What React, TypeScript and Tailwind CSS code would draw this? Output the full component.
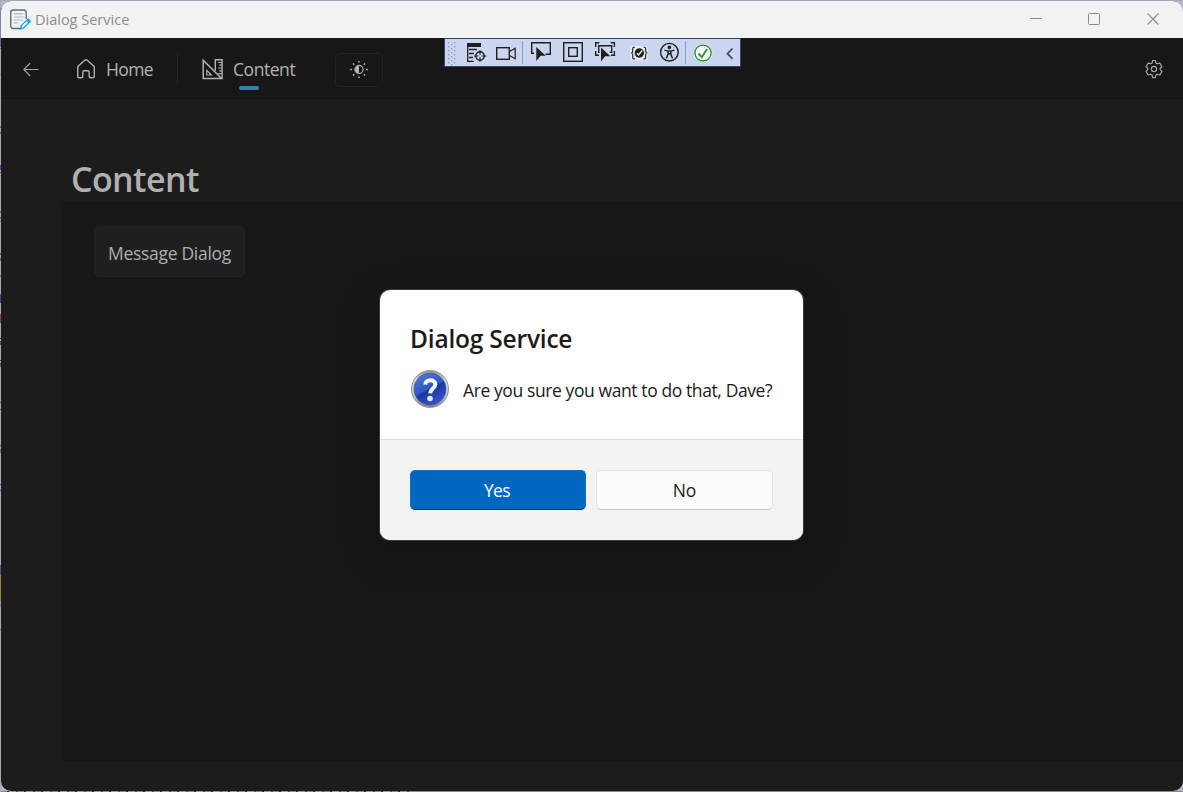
import React from "react";

type Mark = [top: number, height: number, color: string];

const editorMarks: Mark[] = [
  [8, 30, "#7b84ad"], [38, 9, "#5c678f"], [48, 1, "#717a9a"], [74, 1, "#7783ab"],
  [126, 2, "#37808c"], [132, 2, "#37808c"], [165, 5, "#7a35bb"], [172, 1, "#6d39a5"],
  [211, 2, "#3d7c86"], [217, 2, "#3d7c86"], [221, 1, "#3d7c86"], [253, 2, "#4c5b86"],
  [258, 3, "#59678d"], [275, 2, "#806a5f"], [294, 9, "#384b91"], [314, 3, "#9a4232"],
  [317, 6, "#7d4660"], [338, 1, "#303030"], [341, 4, "#565656"], [360, 1, "#303030"],
  [363, 4, "#5a5a5a"], [402, 1, "#404f88"], [409, 1, "#404f88"], [445, 1, "#4d4b85"],
  [449, 4, "#65719a"], [484, 1, "#6938a4"], [490, 1, "#6938a4"], [565, 10, "#515b85"],
  [575, 27, "#a1834f"], [604, 3, "#7688a1"], [629, 1, "#6b7892"],
];

function EditorEdge() {
  return (
    <svg className="block h-[792px] w-px shrink-0" viewBox="0 0 1 792" shapeRendering="crispEdges">
      <rect width="1" height="792" fill="#a9abad" />
      {editorMarks.map(([y, h, c]) => (
        <rect key={y} y={y} width="1" height={h} fill={c} />
      ))}
    </svg>
  );
}

function TitleBar() {
  return (
    <header className="flex h-[37px] shrink-0 items-center bg-[#f2f2f2] pl-2 text-[#8c8c8c]">
      <svg width="22" height="22" viewBox="0 0 22 22" fill="none">
        <path d="M11 19.5H4a2.2 2.2 0 0 1-2.2-2.2V3.2A2.2 2.2 0 0 1 4 1h11a2.2 2.2 0 0 1 2.2 2.2V10" stroke="#536f7c" strokeWidth="1.4" />
        <path d="M5 4.8h9.5M5 8h9.5M5 11h9.5M5 13.8h4" stroke="#a9bbc1" strokeWidth="1.2" />
        <path d="m11.5 20 .8-3.4 6-6a1.3 1.3 0 0 1 1.9 0l.5.5a1.3 1.3 0 0 1 0 1.9l-6 6Z" fill="#ecf8ff" stroke="#20a5ed" strokeWidth="1.3" />
        <path d="m17.1 11.8 1.8-1.7 2.3 2.3-1.8 1.8ZM11 20.4l1-3 2.1 2Z" fill="#20a5ed" />
      </svg>
      <span className="ml-[4px] pt-px text-[14.5px] font-normal">Dialog Service</span>
      <div className="ml-auto flex items-center">
        <svg width="58" height="37" viewBox="0 0 58 37"><path d="M25 17.5h12" stroke="#8c8c8c" /></svg>
        <svg width="58" height="37" viewBox="0 0 58 37"><rect x="25.5" y="12.5" width="11" height="11" rx="1" fill="none" stroke="#8c8c8c" /></svg>
        <svg width="62" height="37" viewBox="0 0 62 37"><path d="m26.5 12.5 11 11m0-11-11 11" stroke="#8c8c8c" strokeWidth="1.1" /></svg>
      </div>
    </header>
  );
}

function NavBar() {
  return (
    <nav className="flex h-[61px] shrink-0 items-center border-b border-[#131313] bg-[#171717] pt-[2px] text-[17.5px] text-[#b3b3b3]">
      <svg className="ml-[21px]" width="18" height="18" viewBox="0 0 18 18" fill="none" stroke="#a2a2a2" strokeWidth="1.1">
        <path d="M16.5 9.5H2M8.2 3 1.8 9.5 8.2 16" />
      </svg>
      <svg className="ml-[35px]" width="22" height="22" viewBox="0 0 22 22" fill="none" stroke="#b3b3b3" strokeWidth="1.4" strokeLinejoin="round">
        <path d="M2.7 9.4c0-.6.2-1.1.7-1.5l6.4-5.7c.8-.7 1.6-.7 2.4 0l6.4 5.7c.5.4.7.9.7 1.5v8.9c0 1-.5 1.5-1.5 1.5h-2.1c-1 0-1.5-.5-1.5-1.5v-4.2c0-.9-.4-1.3-1.3-1.3H9.1c-.9 0-1.3.4-1.3 1.3v4.2c0 1-.5 1.5-1.5 1.5H4.2c-1 0-1.5-.5-1.5-1.5Z" />
      </svg>
      <span className="ml-[9px] w-[71px] pt-px tracking-[-0.6px]">Home</span>
      <span className="h-[30px] w-px bg-[#252525]" />
      <svg className="ml-[24px]" width="22" height="22" viewBox="0 0 22 22" fill="none" stroke="#b3b3b3">
        <path d="M1.2 2.2 19.6 20.5H1.2Z" strokeWidth="1.5" />
        <path d="M4.8 12.4 9.4 17H4.8Z" strokeWidth="1.2" />
        <path d="M13.3 12.7V1.8h6.8v18.7" strokeWidth="1.4" />
        <path d="M16.2 4.5H20M17.3 7.2H20M16.2 10H20M17.3 12.8H20M16.2 15.6H20" strokeWidth="1.2" />
      </svg>
      <div className="relative ml-[9px] w-[102px] pt-px tracking-[-0.45px]">
        Content
        <span className="absolute top-[31px] left-[6px] h-1 w-5 rounded-full bg-[#3180b0]" />
      </div>
      <button className="mt-px flex h-[34px] w-12 items-center justify-center rounded-[5px] border border-[#232323]" aria-label="Theme">
        <svg width="20" height="20" viewBox="0 0 20 20" fill="none" stroke="#b3b3b3">
          <circle cx="10" cy="9.5" r="4.1" strokeWidth="1.2" />
          <path d="M10 5.4a4.1 4.1 0 0 0 0 8.2Z" fill="#171717" stroke="none" />
          <path d="M10 5.4a4.1 4.1 0 0 0 0 8.2Z" fill="#b3b3b3" stroke="none" />
          <path d="M10 1v1.6M10 16.4V18M1.2 9.5h1.7M17 9.5h1.8M4 3.5l1.2 1.2M14.8 14.3l1.2 1.2M4 15.5l1.2-1.2M14.8 4.7 16 3.5" strokeWidth="1.5" />
        </svg>
      </button>
      <svg className="mr-[19px] ml-auto" width="20" height="20" viewBox="0 0 20 20" fill="none" stroke="#a8a8a8" strokeWidth="1.15" strokeLinejoin="round">
        <path d="M8.7 1.5h2.6l.6 2.5 1.4.8 2.5-.7 2.2 3.6-1.8 1.6v1.4l1.8 1.7-2.2 3.6-2.5-.7-1.4.8-.6 2.5H8.7l-.6-2.5-1.4-.8-2.5.7L2 12.4l1.8-1.7V9.3L2 7.7l2.2-3.6 2.5.7L8.1 4Z" />
        <circle cx="10" cy="10" r="2.6" />
      </svg>
    </nav>
  );
}

function DebugToolbar() {
  return (
    <div className="absolute top-[38px] left-[444px] h-[29px] w-[297px] border border-[#35436b] bg-[#ccd5f0]">
      <svg className="block" width="295" height="27" viewBox="445 39 295 27" fill="none" stroke="#1f1f1f" strokeWidth="1.4">
        <g fill="#8593b9" stroke="none">
          {[42, 46, 50, 54, 58, 62].map((y) => (
            <g key={y}>
              <rect x="448" y={y} width="1.3" height="1.3" />
              <rect x="454" y={y} width="1.3" height="1.3" />
              <rect x="451" y={y + 2} width="1.3" height="1.3" />
            </g>
          ))}
        </g>
        <rect x="467" y="43" width="14" height="4" fill="#1f1f1f" stroke="none" />
        <path d="M467.7 46v15.3h6M469 49.5h8M469 53.5h5M469 57.5h4" strokeWidth="1.3" />
        <circle cx="480" cy="56" r="4.2" fill="#ccd5f0" />
        <path d="M480 50.2v4.5M480 57.3v4.5M474 56h4.5M481.5 56h4.8" strokeWidth="1.2" />
        <rect x="496.7" y="47.7" width="12.6" height="11.6" />
        <path d="m510 51.2 5.2-3v10.6l-5.2-3" strokeWidth="1.2" />
        <path d="M522.5 41v23M685.5 41v23" stroke="#8b9bcd" strokeWidth="1" />
        <path d="M534 53.3h-2.3V42.7h18.6v11.6h-4.8" />
        <path d="m536.3 47 9.5 8.8h-5.2L536.3 61Z" fill="#1f1f1f" stroke="none" />
        <rect x="563.7" y="42.7" width="18.6" height="18.6" />
        <rect x="568.7" y="47.7" width="8.6" height="8.6" />
        <path d="M595.7 47v-4.3h3.6M610.8 42.7h3.6V47M614.4 51v4.2H611M595.7 51v4.2h3.2M599.5 52.2h-.8v-6.5h13v6.5h-2" />
        <path d="m601 47.5 9.4 8.7h-5.3L601 61.5Z" fill="#1f1f1f" stroke="none" />
        <rect x="630.5" y="46" width="17.5" height="14.5" rx="2" fill="#e8e9ec" stroke="none" />
        <path d="M635 47.3h-1.3c-.8 0-1 .6-1 1.2v3c0 1-.7 1.5-1.7 1.5 1 0 1.7.5 1.7 1.6v3c0 .8.3 1.3 1 1.3h1.3M643.5 47.3h1.2c.8 0 1 .6 1 1.2v3c0 1 .7 1.5 1.7 1.5-1 0-1.7.5-1.7 1.6v3c0 .8-.3 1.3-1 1.3h-1.2" strokeWidth="1.1" />
        <circle cx="639.3" cy="53" r="4.7" fill="#1f1f1f" stroke="none" />
        <path d="m636.8 53.2 1.7 1.8 3.7-4.5" stroke="#eee" />
        <circle cx="669.4" cy="52.2" r="8.8" />
        <circle cx="669.4" cy="47.4" r="1.8" fill="#1f1f1f" stroke="none" />
        <path d="m664.4 50.1 3.6 1h2.8l3.6-1M668 51v3l-1.7 4.5M670.8 51v3l1.7 4.5M668 53.7h2.8" strokeWidth="1.5" />
        <circle cx="703" cy="53" r="9.3" fill="#fff" stroke="none" />
        <circle cx="703" cy="53" r="8.1" stroke="#2d9637" strokeWidth="1.5" />
        <path d="m698.5 53.5 3.3 3.7 5.3-8.2" stroke="#2d9637" strokeWidth="2" />
        <path d="m732.5 48.5-5 5.2 5 5.2" stroke="#3d4b82" strokeWidth="1.8" />
      </svg>
    </div>
  );
}

function QuestionIcon() {
  return (
    <svg width="40" height="40" viewBox="0 0 40 40">
      <defs>
        <linearGradient id="rim" x1="0" y1="0" x2="0" y2="1">
          <stop offset="0" stopColor="#8f9191" /><stop offset=".25" stopColor="#d7d7d5" />
          <stop offset=".7" stopColor="#bdc0c0" /><stop offset="1" stopColor="#777b7c" />
        </linearGradient>
        <linearGradient id="ball" x1=".2" y1="0" x2=".75" y2="1">
          <stop offset="0" stopColor="#5276d6" /><stop offset=".48" stopColor="#2f58c6" />
          <stop offset=".52" stopColor="#1737a2" /><stop offset="1" stopColor="#4054d8" />
        </linearGradient>
      </defs>
      <circle cx="20" cy="19" r="18.5" fill="url(#rim)" stroke="#929596" />
      <circle cx="20" cy="19" r="16" fill="url(#ball)" stroke="#3352a5" strokeWidth=".6" />
      <path d="M15.3 14.6c.2-5.5 10-5.8 10.1-.2 0 4-5.1 4.1-5.3 9" fill="none" stroke="#f5f6f8" strokeWidth="4" />
      <circle cx="20" cy="28.5" r="2.8" fill="#e1e6f3" />
    </svg>
  );
}

function MessageDialog() {
  return (
    <section role="dialog" className="absolute top-[290px] left-[380px] flex h-[250px] w-[423px] flex-col overflow-hidden rounded-[10px] bg-white text-[17.5px] text-[#1b1b1b] shadow-[0_0_0_1px_#3b3b3b,0_12px_36px_8px_rgba(0,0,0,0.2)]">
      <div className="flex h-[149px] shrink-0 flex-col pl-[30px]">
        <h2 className="mt-[33px] h-8 text-[24.5px] leading-8 font-semibold tracking-[-0.2px]">Dialog Service</h2>
        <div className="mt-[15px] flex h-10 items-center">
          <QuestionIcon />
          <p className="ml-[13px] pt-px whitespace-nowrap tracking-[-0.4px]">Are you sure you want to do that, Dave?</p>
        </div>
      </div>
      <div className="flex grow gap-[10px] border-t border-[#dedede] bg-[#f3f3f3] px-[30px] pt-[30px]">
        <button className="h-10 w-[176px] rounded-[5px] border border-[#1472c5] border-b-[#003e77] bg-[#0067c0] pr-[2px] tracking-[-0.6px] text-white">Yes</button>
        <button className="h-10 w-[177px] rounded-[5px] border border-[#e3e3e3] border-b-[#c8c8c8] bg-[#fbfbfb] tracking-[-0.1px]">No</button>
      </div>
    </section>
  );
}

export default function App() {
  return (
    <div className="relative flex h-[792px] w-[1183px] overflow-hidden bg-[#b2b7cb] font-['Open_Sans','Noto_Sans',sans-serif]">
      <EditorEdge />
      <div className="flex h-[792px] w-[1182px] flex-col">
        <div className="h-px shrink-0 bg-[#a3a7b8]" />
        <div className="flex h-[790px] shrink-0 flex-col overflow-hidden rounded-[10px] bg-[#1c1c1c]">
          <TitleBar />
          <NavBar />
          <main className="flex grow flex-col pl-[60px]">
            <h1 className="h-[102px] pt-[58px] pl-[10px] text-[34px] leading-[44px] font-semibold tracking-[-0.6px] text-[#b0b0b0]">Content</h1>
            <div className="h-[560px] bg-[#171717] pt-[25px] pl-[33px]">
              <button className="h-[51px] w-[151px] rounded-[5px] border border-[#242424] bg-[#1f1f1f] pt-1 whitespace-nowrap text-[17.5px] tracking-[-0.3px] text-[#adadad]">Message Dialog</button>
            </div>
          </main>
        </div>
        <div className="flex h-px shrink-0">
          <div className="w-[413px] bg-[repeating-linear-gradient(90deg,#8a8a8a_0_6px,#343434_6px_8px,#999_8px_15px,#555_15px_17px)]" />
          <div className="grow bg-[#8a8a8a]" />
        </div>
      </div>
      <DebugToolbar />
      <MessageDialog />
    </div>
  );
}
